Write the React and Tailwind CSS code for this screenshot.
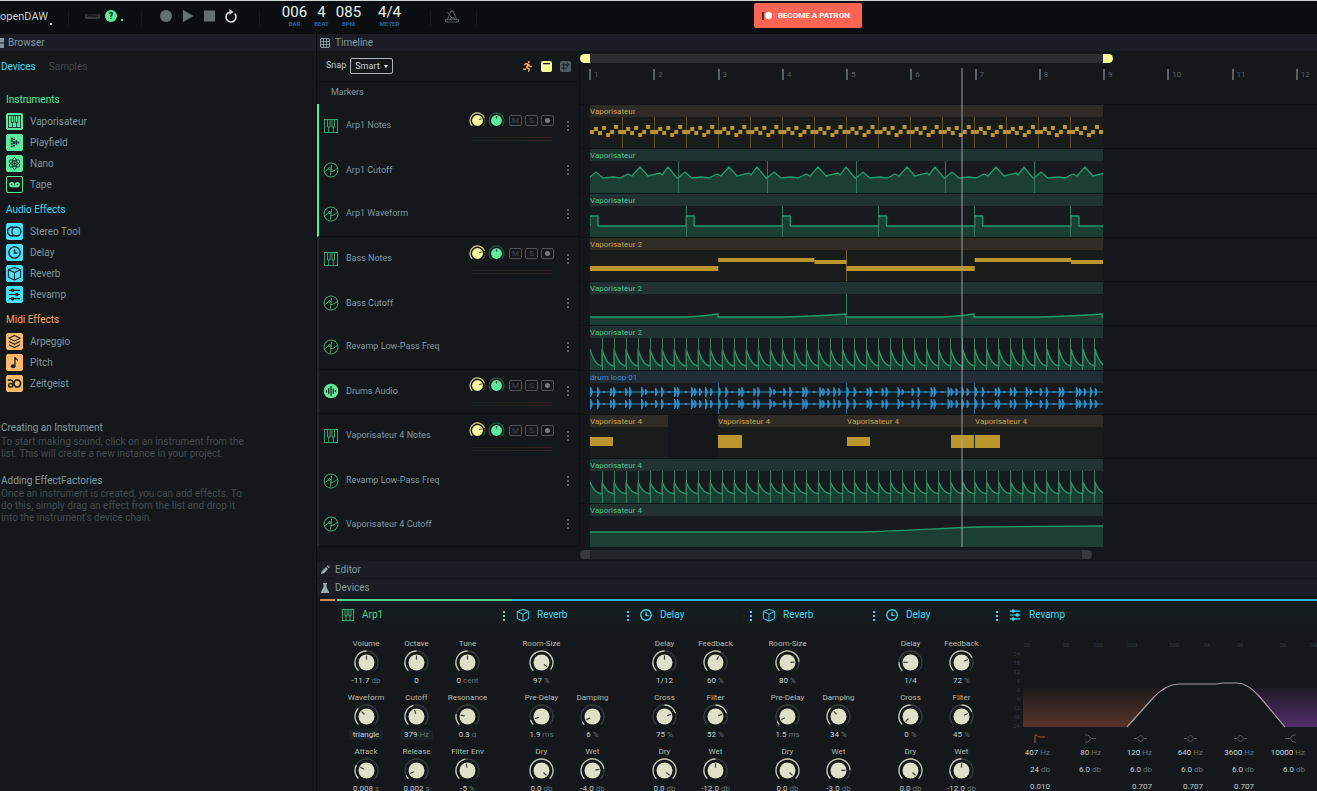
import React, { useState } from "react";
import clsx from "clsx";
import { FaRunning } from "react-icons/fa";

/* ---------- icons ---------- */

const icons = {
  keys: (
    <g fill="none" stroke="currentColor" strokeWidth="0.9">
      <rect x="1.500" y="1.500" width="13" height="13" />
      <path d="M4.500 1.500v7.500h2.500v-7.500M9 1.500v7.500h2.500v-7.500M5.700 9v5.500M10.300 9v5.500" />
    </g>
  ),
  playfield: (
    <g fill="currentColor">
      <path d="M4 3h2v2h-2zM4 5.700h2v2h-2zM4 8.400h2v2h-2zM4 11.100h2v2h-2zM6.600 3.700h2v2h-2zM6.600 6.300h2v3.400h-2zM6.600 10.300h2v2h-2zM9.200 5.700h1.600v4.600h-1.600zM11.400 7h1.600v2h-1.600z" />
    </g>
  ),
  atom: (
    <g fill="none" stroke="currentColor" strokeWidth="0.9">
      <ellipse cx="8" cy="8" rx="2.600" ry="6.200" />
      <ellipse cx="8" cy="8" rx="2.600" ry="6.200" transform="rotate(60 8 8)" />
      <ellipse cx="8" cy="8" rx="2.600" ry="6.200" transform="rotate(120 8 8)" />
      <circle cx="8" cy="8" r="1" fill="currentColor" />
    </g>
  ),
  tape: (
    <g fill="none" stroke="currentColor" strokeWidth="2">
      <circle cx="5" cy="8" r="1.800" />
      <circle cx="11" cy="8" r="1.800" />
      <path d="M5 10h6" />
    </g>
  ),
  stereo: (
    <g fill="none" stroke="currentColor" strokeWidth="1.5">
      <circle cx="10" cy="8" r="4.800" />
      <path d="M7 3.500a4.800 4.800 0 1 0 0 9" />
    </g>
  ),
  clock: (
    <g fill="none" stroke="currentColor" strokeWidth="1.500">
      <circle cx="8" cy="8" r="6" />
      <path d="M8 4.500v4h3" />
    </g>
  ),
  cube: (
    <g fill="none" stroke="currentColor" strokeWidth="1.100" strokeLinejoin="round">
      <path d="M8 1.500l6.500 2.500v8l-6.500 3-6.500-3v-8zM1.500 4l6.500 3 6.500-3M8 7v8" />
    </g>
  ),
  sliders: (
    <g stroke="currentColor" strokeWidth="1.300" fill="currentColor">
      <path d="M2 3.500h12M2 8h12M2 12.500h12" />
      <circle cx="6" cy="3.500" r="1.300" />
      <circle cx="10.500" cy="8" r="1.300" />
      <circle cx="6" cy="12.500" r="1.300" />
    </g>
  ),
  layers: (
    <g fill="none" stroke="currentColor" strokeWidth="1.200" strokeLinejoin="round">
      <path d="M8 1.500l6 3-6 3-6-3zM2 8l6 3 6-3M2 11.500l6 3 6-3" />
    </g>
  ),
  note: (
    <g fill="currentColor">
      <ellipse cx="6.500" cy="12" rx="2.500" ry="2.200" />
      <path d="M7.800 12v-10h1.200c.5 1.800 3.500 1.600 2.500 5-.4-1.500-1.400-1.900-2.300-2v7z" />
    </g>
  ),
  zeitgeist: (
    <g fill="none" stroke="currentColor" strokeWidth="1.700">
      <path d="M1 5c2-1.500 4.500-1 5.500 1.500l1.500 3.500c1.200 2.800 6.500 2.500 6.500-2s-5.300-4.800-6.500-2l-1.500 4c-1 2.500-4.700 2.300-4.700 0s3-2.600 4.200-.8" />
    </g>
  ),
  automation: (
    <g fill="none" stroke="currentColor" strokeWidth="1">
      <circle cx="8" cy="8" r="7" />
      <path d="M2 9.500l4-3M8.500 3l-1 10.500M7.500 9.500c2.500.2 4.500-1 6.500-3" />
      <circle cx="6.500" cy="6.500" r="1" />
    </g>
  ),
  audio: (
    <g>
      <circle cx="8" cy="8" r="7.300" fill="currentColor" />
      <path
        d="M3.500 7v2.500M5.700 5v6M8 3v10M10.300 5.500v5.500M12.500 7v2"
        stroke="#14181a"
        strokeWidth="1.200"
      />
    </g>
  ),
};

const Icon = ({ name, className }) => (
  <svg viewBox="0 0 16 16" className={clsx("shrink-0", className)} aria-hidden="true">
    {icons[name]}
  </svg>
);

const MenuDots = ({ label, className }) => (
  <button aria-label={label} className={clsx("w-2 h-4 shrink-0", className)}>
    <svg viewBox="0 0 8 16" className="w-2 h-4" fill="currentColor">
      <rect x="3" y="3" width="2" height="2" />
      <rect x="3" y="7" width="2" height="2" />
      <rect x="3" y="11" width="2" height="2" />
    </svg>
  </button>
);

/* ---------- knob ---------- */

const polar = (c, r, value) => {
  const a = ((value * 270 - 225) * Math.PI) / 180;
  return [c + r * Math.cos(a), c + r * Math.sin(a)];
};

const arc = (c, r, from, to) => {
  const [x0, y0] = polar(c, r, from);
  const [x1, y1] = polar(c, r, to);
  const large = (to - from) * 270 > 180 ? 1 : 0;
  return `M${x0} ${y0}A${r} ${r} 0 ${large} 1 ${x1} ${y1}`;
};

const Knob = ({ value, anchor = 0, size, color, track, arcColor, label }) => {
  const [v, setV] = useState(value);
  const c = size / 2;
  const r = c - 1;
  const inner = size * 0.32;
  const [px, py] = polar(c, inner - 1, v);
  const [qx, qy] = polar(c, inner * 0.35, v);
  return (
    <span className="relative block shrink-0">
      <svg width={size} height={size} className="block">
        <path d={arc(c, r, 0, 1)} fill="none" stroke={track} strokeWidth="1.3" />
        {v !== anchor && (
          <path
            d={arc(c, r, Math.min(v, anchor), Math.max(v, anchor))}
            fill="none"
            stroke={arcColor}
            strokeWidth="1.3"
          />
        )}
        <circle cx={c} cy={c} r={inner} fill={color} />
        <path d={`M${qx} ${qy}L${px} ${py}`} stroke="#3c403c" strokeWidth="1.2" />
      </svg>
      <input
        type="range"
        min="0"
        max="1"
        step="0.01"
        aria-label={label}
        value={v}
        onChange={(e) => setV(Number(e.target.value))}
        className="absolute inset-0 w-full h-full opacity-0 cursor-pointer"
      />
    </span>
  );
};

/* ---------- header ---------- */

const Divider = () => <div className="w-px h-4 bg-[#14191b]" />;

const Counter = ({ value, unit, className }) => (
  <div className={clsx("flex flex-col items-center", className)}>
    <span className="text-[15px] leading-4 text-[#e8f4f2]">{value}</span>
    <span className="text-[6px] leading-[7px] font-medium text-[#2e72b0]">{unit}</span>
  </div>
);

const Header = () => (
  <header className="h-[33px] shrink-0 flex items-center bg-[#0b0e10]">
    <button className="w-[52px] mb-[2px] flex items-end text-[11px] leading-4 text-[#c3cccb]">
      openDAW<span className="w-[2px] h-[2px] ml-[2px] shrink-0 bg-[#c3cccb]" />
    </button>
    <div className="w-[33px] flex justify-center">
      <Divider />
    </div>
    <span className="w-[15px] h-[5px] mb-[3px] flex items-center justify-center rounded-[1px] bg-[#343a3c] text-[5px] font-bold text-[#0b0e10]">
      MIDI
    </span>
    <button className="ml-[5px] mb-[3px] w-3 h-3 rounded-full bg-[#5eeb9d] text-[9px] leading-3 font-bold text-[#0b0e10]">
      ?
    </button>
    <span className="w-[2px] h-[2px] ml-1 mt-1 bg-[#5eeb9d]" />
    <div className="w-[37px] flex justify-center">
      <Divider />
    </div>
    <div className="flex items-center mb-[3px] text-[#667073]">
      <button aria-label="Record" className="w-[22px]">
        <svg viewBox="0 0 12 12" className="w-3 h-3" fill="currentColor">
          <circle cx="6" cy="6" r="6" />
        </svg>
      </button>
      <button aria-label="Play" className="w-[22px]">
        <svg viewBox="0 0 12 12" className="w-3 h-3" fill="currentColor">
          <path d="M1 0l10.500 6-10.500 6z" />
        </svg>
      </button>
      <button aria-label="Stop" className="w-5">
        <svg viewBox="0 0 12 12" className="w-3 h-3" fill="currentColor">
          <path d="M0 .5h11v11h-11z" />
        </svg>
      </button>
      <button aria-label="Loop" className="w-[14px] text-[#d5dcda]">
        <svg viewBox="0 0 14 14" className="w-[14px] h-[14px]">
          <path
            d="M10.700 4.600a5 5 0 1 1-6.900-.4q1.500-1.200 3.200-1.200"
            fill="none"
            stroke="currentColor"
            strokeWidth="1.700"
          />
          <path d="M5.500 0l4 3-4 3z" fill="currentColor" />
        </svg>
      </button>
    </div>
    <div className="w-[43px] flex justify-center">
      <Divider />
    </div>
    <div className="flex mb-1">
      <Counter value="006" unit="BAR" className="w-[27px]" />
      <Counter value="4" unit="BEAT" className="w-[27px]" />
      <Counter value="085" unit="BPM" className="w-[27px]" />
      <Counter value="4/4" unit="METER" className="w-[55px]" />
    </div>
    <div className="w-[27px] flex justify-center">
      <Divider />
    </div>
    <button aria-label="Metronome" className="mb-[3px] text-[#545d60]">
      <svg viewBox="0 0 16 16" className="w-4 h-4" fill="none" stroke="currentColor">
        <path d="M3.500 11.500l3.500-8.500h2l3.500 8.500M1.500 11.500h13v2.500h-13zM8.500 11l-5-7M6.500 11a2.500 2.500 0 0 1 4.500 0" />
      </svg>
    </button>
    <div className="w-8 flex justify-center">
      <Divider />
    </div>
    <a
      href="#patron"
      className="ml-[262px] w-[108px] h-[25px] mb-1 flex items-center gap-1 pl-2 rounded-[2px] bg-[#ff6552] text-white text-[8px] font-bold whitespace-nowrap"
    >
      <svg viewBox="0 0 12 10" className="w-3 h-[10px]">
        <rect x="0" y="1" width="2" height="8" fill="#4a2b40" />
        <circle cx="6.500" cy="4.500" r="3.500" fill="#fff" />
      </svg>
      BECOME A PATRON
    </a>
  </header>
);

const PanelTitle = ({ icon, children, className }) => (
  <h2
    className={clsx(
      "h-[17px] shrink-0 flex items-center bg-[#1a1e24] text-[10px] leading-4 text-[#8297a2]",
      className
    )}
  >
    {icon}
    {children}
  </h2>
);

/* ---------- browser ---------- */

const deviceGroups = [
  {
    title: "Instruments",
    titleClass: "text-[#5eeb9d]",
    tileClass: "bg-[#5eeb9d] border-[#5eeb9d]",
    items: [
      { name: "Vaporisateur", icon: "keys" },
      { name: "Playfield", icon: "playfield" },
      { name: "Nano", icon: "atom" },
      { name: "Tape", icon: "tape", outlined: true },
    ],
  },
  {
    title: "Audio Effects",
    titleClass: "text-[#3fd8f2]",
    tileClass: "bg-[#47dffa] border-[#47dffa]",
    items: [
      { name: "Stereo Tool", icon: "stereo" },
      { name: "Delay", icon: "clock" },
      { name: "Reverb", icon: "cube" },
      { name: "Revamp", icon: "sliders" },
    ],
  },
  {
    title: "Midi Effects",
    titleClass: "text-[#f9a45c]",
    tileClass: "bg-[#ffb86b] border-[#ffb86b]",
    items: [
      { name: "Arpeggio", icon: "layers" },
      { name: "Pitch", icon: "note" },
      { name: "Zeitgeist", icon: "zeitgeist" },
    ],
  },
];

const Browser = () => {
  const [tab, setTab] = useState("Devices");
  return (
    <aside className="w-[316px] shrink-0 flex flex-col">
      <PanelTitle
        className="gap-1"
        icon={
          <svg viewBox="0 0 4 10" className="w-1 h-[10px]" fill="#8297a2">
            <path d="M0 0h4v4.500h-4zM0 5.500h4v4.500h-4z" />
          </svg>
        }
      >
        Browser
      </PanelTitle>
      <nav className="h-[30px] flex items-center gap-[13px] pl-px text-[10px]">
        {["Devices", "Samples"].map((t) => (
          <button
            key={t}
            onClick={() => setTab(t)}
            className={t === tab ? "text-[#3fd8f2]" : "text-[#3f474b]"}
          >
            {t}
          </button>
        ))}
      </nav>

      <div className="pl-1.5 pt-1">
        {deviceGroups.map((group) => (
          <section key={group.title}>
            <h3 className={clsx("pt-[7px] pb-[3px] text-[10px] leading-4", group.titleClass)}>
              {group.title}
            </h3>
            <ul>
              {group.items.map((item) => (
                <li key={item.name} className="h-[21px] flex items-center gap-[7px]">
                  <span
                    className={clsx(
                      "w-[17px] h-[17px] flex items-center justify-center rounded-[2px] border",
                      item.outlined
                        ? "border-[#5eeb9d] text-[#5eeb9d]"
                        : [group.tileClass, "text-[#14262a]"]
                    )}
                  >
                    <Icon name={item.icon} className="w-[15px] h-[15px]" />
                  </span>
                  <span className="text-[10px] text-[#81939d]">{item.name}</span>
                </li>
              ))}
            </ul>
          </section>
        ))}
      </div>

      <div className="pl-px pr-16 pt-[27px] flex flex-col gap-[14px] text-[10px] leading-3">
        <section>
          <h4 className="text-[#8297a2] leading-[14px]">Creating an Instrument</h4>
          <p className="pt-[1px] text-[#434c50]">
            To start making sound, click on an instrument from the
            <br />
            list. This will create a new instance in your project.
          </p>
        </section>
        <section>
          <h4 className="text-[#8297a2] leading-[14px]">Adding EffectFactories</h4>
          <p className="text-[#434c50]">
            Once an instrument is created, you can add effects. To
            <br />
            do this, simply drag an effect from the list and drop it
            <br />
            into the instrument's device chain.
          </p>
        </section>
      </div>
    </aside>
  );
};

/* ---------- timeline regions ---------- */

const WIDTH = 513;
const BAR = WIDTH / 8;
const BODY = 32;

const times = (n, fn) => Array.from({ length: n }, (_, i) => fn(i));

const Lines = ({ step, color, from = 1 }) => (
  <g stroke={color}>
    {times(Math.ceil(WIDTH / step) - from, (i) => {
      const x = Math.floor((i + from) * step) + 0.5;
      return <path key={i} d={`M${x} 0V${BODY}`} />;
    })}
  </g>
);

const Curve = ({ d }) => (
  <g>
    <path d={`${d}V${BODY}H0Z`} fill="#1b3f33" />
    <path d={d} fill="none" stroke="#229a6b" strokeWidth="1.3" />
  </g>
);

const ArpNotes = () => {
  const ys = [15, 12, 16, 11, 18, 15, 10, 15];
  return (
    <g>
      <Lines step={BAR / 2} color="#5d5333" />
      <g fill="#bb962d">
        {times(128, (i) => (
          <rect key={i} x={(i * BAR) / 16} y={ys[i % 8] - 2} width="4" height="4" />
        ))}
      </g>
    </g>
  );
};

const ArpCutoff = () => {
  const shape = [
    [0, 17], [7, 11], [14, 17], [24, 16], [31, 17], [39, 13], [43, 15],
    [51, 6], [59, 15], [71, 12], [73, 14], [79, 6], [88, 17],
  ];
  const pts = times(6, (k) => shape.map(([x, y]) => `${x - 1 + k * 89} ${y}`)).flat();
  return (
    <g>
      <Curve d={`M${pts.join("L")}`} />
      <Lines step={88.8} color="#2f7a5c" />
    </g>
  );
};

const ArpWaveform = () => {
  const step = BAR * 1.5;
  const d = times(6, (k) => `V10H${k * step + 8}V20H${Math.min((k + 1) * step, WIDTH)}`).join("");
  return (
    <g>
      <Curve d={`M0 20${d}`} />
      <Lines step={step} color="#2f7a5c" />
    </g>
  );
};

const BassNotes = () => (
  <g fill="#bb962d">
    <path d={`M${BAR * 4} 0V${BODY}`} stroke="#6d6137" />
    {[0, BAR * 4].map((x) => (
      <g key={x}>
        <rect x={x} y="16" width={BAR * 2} height="5" />
        <rect x={x + BAR * 2} y="8" width={BAR * 1.5} height="4" />
        <rect x={x + BAR * 3.5} y="10" width={BAR * 0.5} height="4" />
      </g>
    ))}
  </g>
);

const BassCutoff = () => {
  const loop = (x) =>
    `${x} 23H${x + 96}Q${x + 114} 22 ${x + 128} 20V23H${x + 192}Q${x + 230} 22 ${x + 256} 20V23`;
  return (
    <g>
      <Curve d={`M${loop(0)}L${loop(256)}H${WIDTH}`} />
      <Lines step={BAR * 4} color="#2f7a5c" />
    </g>
  );
};

const Decay = ({ low }) => {
  const step = (BAR * 3) / 16;
  const d = times(43, (i) => {
    const x = i * step;
    return `L${x} 11Q${x + step * 0.35} ${low - 1} ${x + step} ${low}`;
  }).join("");
  return (
    <g>
      <Curve d={`M0 11${d}`} />
      <Lines step={step} color="#36805f" />
    </g>
  );
};

const DrumLoop = () => {
  // [offset, amplitude] of every hit in one two-bar loop
  const hits = [
    [1, 5], [8, 5], [14, 1], [21, 4], [24, 5], [30, 1], [36, 4], [40, 5], [52, 5], [56, 3],
    [62, 1], [66, 4], [72, 5], [79, 1], [85, 5], [88, 5], [96, 1], [102, 5], [105, 4], [110, 4],
    [116, 5], [121, 4],
  ];
  return (
    <g>
      <Lines step={BAR * 2} color="#2c6d97" />
      <g fill="#2b8cc6">
        {[9, 21].map((cy) => (
          <g key={cy}>
            <rect x="0" y={cy - 0.5} width={WIDTH} height="1" />
            {times(4, (k) =>
              hits.map(([x, a]) => (
                <path
                  key={`${k}-${x}`}
                  d={`M${k * BAR * 2 + x - 1} ${cy - a}h1l1 ${a * 0.4}l1 ${a * 0.6}l-1 ${a * 0.6}l-1 ${a * 0.4}h-1z`}
                />
              ))
            )}
          </g>
        ))}
      </g>
    </g>
  );
};

const RiseCutoff = () => <Curve d="M0 16H270C320 15 350 12 390 11L513 10" />;

const Block = ({ blocks }) => (
  <g fill="#bb962d">
    {blocks.map(([x, y, w, h]) => (
      <rect key={x} x={x} y={y} width={w} height={h} />
    ))}
  </g>
);

const regionTones = {
  note: { head: "bg-[#2f2c27] text-[#c4a24a]", body: "bg-[#1a1c1b]" },
  value: { head: "bg-[#203330] text-[#4cc08e]", body: "bg-[#171b1d]" },
  audio: { head: "bg-[#202c36] text-[#3f8dcc]", body: "bg-[#161a1d]" },
};

const Region = ({ name, tone, className, children }) => (
  <div className={clsx("flex flex-col shrink-0", className)}>
    <div className={clsx("h-3 text-[8px] leading-[13px] truncate", regionTones[tone].head)}>
      {name}
    </div>
    <svg className={clsx("block w-full flex-1 min-h-0", regionTones[tone].body)}>{children}</svg>
  </div>
);

const full = (name, tone, art) => (
  <Region name={name} tone={tone} className="w-[513px]">
    {art}
  </Region>
);

const tracks = [
  { name: "Arp1 Notes", icon: "keys", mixer: true, active: true, lane: full("Vaporisateur", "note", <ArpNotes />) },
  { name: "Arp1 Cutoff", icon: "automation", active: true, lane: full("Vaporisateur", "value", <ArpCutoff />) },
  { name: "Arp1 Waveform", icon: "automation", active: true, last: true, lane: full("Vaporisateur", "value", <ArpWaveform />) },
  { name: "Bass Notes", icon: "keys", mixer: true, lane: full("Vaporisateur 2", "note", <BassNotes />) },
  { name: "Bass Cutoff", icon: "automation", lane: full("Vaporisateur 2", "value", <BassCutoff />) },
  { name: "Revamp Low-Pass Freq", icon: "automation", last: true, lane: full("Vaporisateur 2", "value", <Decay low={28} />) },
  { name: "Drums Audio", icon: "audio", mixer: true, last: true, lane: full("drum loop 01", "audio", <DrumLoop />) },
  {
    name: "Vaporisateur 4 Notes",
    icon: "keys",
    mixer: true,
    lane: (
      <>
        <Region name="Vaporisateur 4" tone="note" className="w-[78px] mr-[50px]">
          <Block blocks={[[0, 10, 23, 9]]} />
        </Region>
        <Region name="Vaporisateur 4" tone="note" className="w-[129px]">
          <Block blocks={[[0, 8, 24, 13]]} />
        </Region>
        <Region name="Vaporisateur 4" tone="note" className="w-32">
          <Block blocks={[[0, 10, 23, 9], [104, 8, 23, 13]]} />
        </Region>
        <Region name="Vaporisateur 4" tone="note" className="w-32">
          <Block blocks={[[0, 8, 25, 13]]} />
        </Region>
      </>
    ),
  },
  { name: "Revamp Low-Pass Freq", icon: "automation", lane: full("Vaporisateur 4", "value", <Decay low={23} />) },
  { name: "Vaporisateur 4 Cutoff", icon: "automation", last: true, lane: full("Vaporisateur 4", "value", <RiseCutoff />) },
];

const TrackMixer = ({ name }) => (
  <div className="w-[86px] flex flex-col gap-2">
    <div className="flex items-center">
      <Knob value={0.75} size={17} color="#fbfaa0" track="#3a3b2c" arcColor="#c9c886" label={`${name} volume`} />
      <span className="w-[2px]" />
      <Knob value={0.5} anchor={0.5} size={17} color="#5eeb9d" track="#22503a" arcColor="#5eeb9d" label={`${name} panning`} />
      <div className="flex gap-[3px] pl-1">
        {["M", "S"].map((t) => (
          <button
            key={t}
            className="w-[13px] h-[11px] rounded-[2px] border border-[#4c5257] text-[8px] leading-[9px] text-[#42484d]"
          >
            {t}
          </button>
        ))}
        <button
          aria-label="Arm"
          className="w-[13px] h-[11px] flex items-center justify-center rounded-[2px] border border-[#4c5257]"
        >
          <span className="w-[5px] h-[5px] rounded-full bg-[#757b81]" />
        </button>
      </div>
    </div>
    <div className="ml-[3px] w-20 flex flex-col gap-[2px]">
      <div className="h-px bg-linear-to-r from-[#17281f] via-[#26261c] to-[#3a2022]" />
      <div className="h-px bg-linear-to-r from-[#17281f] via-[#26261c] to-[#3a2022]" />
    </div>
  </div>
);

const Track = ({ track }) => (
  <div className="flex min-h-0">
    <div
      className={clsx(
        "w-[263px] shrink-0 flex items-center border-l-2 pr-[7px] border-r border-r-[#0f1214]",
        track.active ? "border-l-[#5eeb9d]" : "border-l-[#23282d]",
        track.last && "border-b border-b-[#0e1113]"
      )}
    >
      <Icon
        name={track.icon}
        className={clsx("w-4 h-4 ml-1 mr-[7px]", track.icon === "audio" ? "text-[#5eeb9d]" : "text-[#43ad78]")}
      />
      <span className="flex-1 text-[9px] text-[#8297a2] whitespace-nowrap">{track.name}</span>
      {track.mixer && <TrackMixer name={track.name} />}
      <MenuDots label="Track menu" className="ml-[9px] text-[#596267]" />
    </div>
    <div className="flex-1 min-w-0 flex pl-[10px] overflow-hidden border-t border-[#101315]">
      {track.lane}
    </div>
  </div>
);

const Timeline = () => (
  <section className="relative shrink-0 flex flex-col">
    <PanelTitle
      className="pl-[3px] gap-[5px]"
      icon={
        <svg viewBox="0 0 10 10" className="w-[10px] h-[10px]" fill="none" stroke="#8297a2">
          <rect x=".5" y=".5" width="9" height="9" rx="1.500" />
          <path d="M1 3.500h8M1 6.500h8M3.500 1v8M6.500 1v8" />
        </svg>
      }
    >
      Timeline
    </PanelTitle>
    <div className="flex">
      <div className="w-[263px] shrink-0 border-r border-[#0f1214]">
        <div className="h-[30px] flex items-center pl-[9px] pr-2 text-[9px]">
          <label htmlFor="snap" className="mr-1 text-[#bfc9cb]">
            Snap
          </label>
          <div className="relative">
            <select
              id="snap"
              defaultValue="Smart"
              className="w-[43px] h-4 pl-1 appearance-none rounded-[2px] border border-[#aeb7b9] bg-[#14181a] text-[9px] leading-3 text-[#c9d2d3]"
            >
              <option>Smart</option>
              <option>Bar</option>
            </select>
            <svg viewBox="0 0 4 3" className="absolute right-[5px] top-[7px] w-1 h-[3px]" fill="#e4ecec">
              <path d="M0 0h4l-2 3z" />
            </svg>
          </div>
          <div className="ml-auto flex items-center gap-2">
            <button aria-label="Follow cursor" className="text-[#f3a866]">
              <FaRunning size={11} />
            </button>
            <button aria-label="Loop area">
              <svg viewBox="0 0 11 11" className="w-[11px] h-[11px]">
                <rect width="11" height="11" rx="2" fill="#fbfaa0" />
                <rect x="2" y="2" width="7" height="1.300" fill="#14181a" />
              </svg>
            </button>
            <button aria-label="Clip grid">
              <svg viewBox="0 0 11 11" className="w-[11px] h-[11px]">
                <rect width="11" height="11" rx="2" fill="#525c64" />
                <path d="M1.500 3.800h8M1.500 7.200h5M3.800 1.500v8M7.200 1.500v5" stroke="#1d2327" />
              </svg>
            </button>
          </div>
        </div>
        <div className="h-[23px] flex items-center pl-[14px] border-t border-[#111416] text-[9px] text-[#8297a2]">
          Markers
        </div>
      </div>
      <div className="flex-1 min-w-0 overflow-hidden pt-[3px]">
        <div className="flex w-[533px] h-[9px]">
          <div className="w-[10px] rounded-l-full bg-[#fbfaa0]" />
          <div className="flex-1 bg-[#2c2f32]" />
          <div className="w-[10px] rounded-r-full bg-[#fbfaa0]" />
        </div>
        <div className="ml-[9px] mt-[6px] w-[771px] grid grid-cols-12">
          {times(12, (i) => (
            <div
              key={i}
              className="h-[11px] pl-[3px] border-l-2 border-[#566266] text-[8px] leading-[11px] text-[#566165]"
            >
              {i + 1}
            </div>
          ))}
        </div>
      </div>
    </div>

    <div className="h-[443px] grid grid-rows-10">
      {tracks.map((track, i) => (
        <Track key={i} track={track} />
      ))}
    </div>

    <div className="h-[14px] pl-[263px] flex items-center">
      <div className="w-[512px] h-[9px] flex justify-between rounded-full bg-[#222528]">
        <span className="w-[10px] rounded-l-full bg-[#383b3d]" />
        <span className="w-[10px] rounded-r-full bg-[#383b3d]" />
      </div>
    </div>

    {/* playhead */}
    <div className="absolute left-[644px] top-[34px] bottom-[14px] w-[2px] bg-[#a3abad]/45" />
  </section>
);

/* ---------- devices ---------- */

const chain = [
  {
    name: "Arp1",
    icon: "keys",
    tone: "text-[#4fd08c] border-[#4fd08c]",
    wide: true,
    knobs: [
      ["Volume", "-11.7", "db", 0.5],
      ["Octave", "0", "", 0.5],
      ["Tune", "0", "cent", 0.5],
      ["Waveform", "triangle", "", 0.33, 0, true],
      ["Cutoff", "379", "Hz", 0.44, 0, true],
      ["Resonance", "0.3", "q", 0.21],
      ["Attack", "0.008", "s", 0.27],
      ["Release", "0.002", "s", 0.07],
      ["Filter Env", "-5", "%", 0.46],
    ],
  },
  {
    name: "Reverb",
    icon: "cube",
    knobs: [
      ["Room-Size", "97", "%", 0.97],
      null,
      ["Pre-Delay", "1.9", "ms", 0.1],
      ["Damping", "6", "%", 0.06],
      ["Dry", "0.0", "db", 1],
      ["Wet", "-4.0", "db", 0.8],
    ],
  },
  {
    name: "Delay",
    icon: "clock",
    knobs: [
      ["Delay", "1/12", "", 0.5],
      ["Feedback", "60", "%", 0.6],
      ["Cross", "75", "%", 0.77, 0.5],
      ["Filter", "52", "%", 0.77, 0.5],
      ["Dry", "0.0", "db", 1],
      ["Wet", "-12.0", "db", 0.5],
    ],
  },
  {
    name: "Reverb",
    icon: "cube",
    knobs: [
      ["Room-Size", "80", "%", 0.82],
      null,
      ["Pre-Delay", "1.5", "ms", 0.07],
      ["Damping", "34", "%", 0.34],
      ["Dry", "0.0", "db", 1],
      ["Wet", "-3.0", "db", 0.83],
    ],
  },
  {
    name: "Delay",
    icon: "clock",
    knobs: [
      ["Delay", "1/4", "", 0.17],
      ["Feedback", "72", "%", 0.74],
      ["Cross", "0", "%", 0, 0.5],
      ["Filter", "45", "%", 0.74, 0.5],
      ["Dry", "0.0", "db", 1],
      ["Wet", "-12.0", "db", 0.5],
    ],
  },
];

const Value = ({ value, unit, boxed }) => (
  <span
    className={clsx(
      "h-[11px] px-1 text-[8px] leading-[11px] whitespace-pre text-[#c3ced8]",
      boxed && "rounded-[2px] bg-[#1a2228]"
    )}
  >
    {value}
    {unit && <span className="text-[#66747c]"> {unit}</span>}
  </span>
);

const KnobCell = ({ knob }) => {
  const [name, value, unit, position, anchor, boxed] = knob;
  return (
    <div className="h-[54px] flex flex-col items-center">
      <span className="h-[13px] text-[8px] leading-[13px] text-[#b7b9ab] whitespace-nowrap">
        {name}
      </span>
      <Knob
        value={position}
        anchor={anchor}
        size={25}
        color="#dfe0ca"
        track="#3b3e3e"
        arcColor="#c3c4b1"
        label={name}
      />
      <Value value={value} unit={unit} boxed={boxed} />
    </div>
  );
};

const DeviceTitle = ({ name, icon, menu = true }) => (
  <div className="h-[35px] pt-[7px] flex items-start text-[10px] leading-[14px]">
    <Icon name={icon} className="w-[14px] h-[14px]" />
    <h3 className="pl-[7px] flex-1">{name}</h3>
    {menu && <MenuDots label="Device menu" className="mr-[3px]" />}
  </div>
);

const Device = ({ device }) => (
  <article
    className={clsx(
      "shrink-0 pl-1 border-t-2 bg-linear-to-b from-[#141d20] to-[#14181a] to-[40px]",
      device.tone || "text-[#3fd8f2] border-[#2fb9cd]",
      device.wide ? "w-[175px] pr-px" : "w-[123px]"
    )}
  >
    <DeviceTitle name={device.name} icon={device.icon} />
    <div
      className={clsx(
        "grid pt-px",
        device.wide ? "grid-cols-[50px_51px_51px]" : "grid-cols-[51px_51px]"
      )}
    >
      {device.knobs.map((knob, i) => (knob ? <KnobCell key={i} knob={knob} /> : <span key={i} />))}
    </div>
  </article>
);

const bell = "M0 7.500h3l3.500-3.500 3.500 3.500-3.500 3.500-3.500-3.500M10 7.500h3";

const bands = [
  { hz: "407", db: "24", q: "0.010", path: "M1 12v-5c0-4 1-4 2-2.500s2 1.500 8 1.500" },
  { hz: "80", db: "6.0", path: "M1 4h3l3 3.500h5M1 11h3l3-3.500" },
  { hz: "120", db: "6.0", q: "0.707", path: bell },
  { hz: "640", db: "6.0", q: "0.707", path: bell },
  { hz: "3600", db: "6.0", q: "0.707", path: bell },
  { hz: "10000", db: "6.0", path: "M12 4h-3l-3 3.500h-5M12 11h-3l-3-3.500" },
];

const freqMarks = [
  [4, "20"], [43, "50"], [75, "100"], [109, "200"], [151, "500"],
  [184, "1k"], [217, "2k"], [260, "5k"], [291, "10k"],
];
const dbMarks = [24, 18, 12, 6, 0, -6, -12, -18, -24];

const Spectrum = () => (
  <div className="pl-[7px]">
    <svg className="block w-full h-[91px] overflow-visible" fontSize="6" fill="#343b40">
      <defs>
        <linearGradient id="low" x1="0" y1="0" x2="0" y2="1">
          <stop offset="0" stopColor="#6b3a30" stopOpacity="0.1" />
          <stop offset="1" stopColor="#6b3a30" stopOpacity="0.8" />
        </linearGradient>
        <linearGradient id="high" x1="0" y1="0" x2="0" y2="1">
          <stop offset="0" stopColor="#55306f" stopOpacity="0.15" />
          <stop offset="1" stopColor="#55306f" stopOpacity="0.95" />
        </linearGradient>
      </defs>
      {freqMarks.map(([x, t]) => (
        <text key={t} x={x + 12} y="11" textAnchor="middle">
          {t}
        </text>
      ))}
      {dbMarks.map((t, i) => (
        <text key={t} x="9" y={20 + i * 9} textAnchor="end">
          {t}
        </text>
      ))}
      <path d="M12 52h146q-9 2-18 11l-24 28h-104z" fill="url(#low)" />
      <path d="M238 52h104v39h-68l-26-30q-5-6-10-9z" fill="url(#high)" />
      <path
        d="M116 91L142 62Q154 49 167 48H205L212 47H226Q236 47 248 60L274 91"
        fill="none"
        stroke="#a79aa3"
        strokeWidth="1.2"
      />
    </svg>
  </div>
);

const Revamp = () => (
  <article className="flex-1 min-w-0 overflow-hidden border-t-2 border-[#2fb9cd] bg-linear-to-b from-[#141d20] to-[#14181a] to-[40px] text-[#3fd8f2]">
    <div className="pl-1">
      <DeviceTitle name="Revamp" icon="sliders" menu={false} />
    </div>
    <Spectrum />
    <div className="flex pl-[11px] pt-1">
      {bands.map((band, i) => (
        <button
          key={band.hz}
          aria-label={`Band ${band.hz} Hz`}
          className={clsx("w-[50px] shrink-0 flex justify-center", i === 0 ? "text-[#c4563a]" : "text-[#525b5f]")}
        >
          <svg viewBox="0 0 13 14" className="w-[13px] h-[14px]" fill="none" stroke="currentColor">
            <path d={band.path} />
          </svg>
        </button>
      ))}
    </div>
    <div className="flex pt-[2px]">
      {bands.map((band) => (
        <div key={band.hz} className="w-[51px] shrink-0 flex flex-col items-end gap-[6px] pr-px">
          <Value value={band.hz} unit="Hz" />
          <Value value={band.db} unit="db" />
          {band.q && <Value value={band.q} />}
        </div>
      ))}
    </div>
  </article>
);

const DevicePanel = () => (
  <section className="flex-1 min-h-0 pt-[3px] pl-[3px] flex overflow-hidden">
    <div className="w-[15px] mr-[2px] shrink-0 border-t-2 border-[#c98a52]" />
    {chain.map((device, i) => (
      <Device key={i} device={device} />
    ))}
    <Revamp />
  </section>
);

const App = () => {
  return (
    <div className="h-screen flex flex-col overflow-hidden bg-[#14181a] font-['Roboto',sans-serif]">
      <div className="h-px shrink-0 bg-[#cfd8d6]" />
      <Header />
      <main className="flex-1 min-h-0 flex">
        <Browser />
        <div className="w-px shrink-0 bg-[#0d1012]" />
        <div className="flex-1 min-w-0 flex flex-col">
          <Timeline />
          <PanelTitle
            className="pl-[3px] gap-[5px]"
            icon={
              <svg viewBox="0 0 10 10" className="w-[10px] h-[10px]" fill="#9aaab3">
                <path d="M1 9l.500-2.500 4.500-4.500 2 2-4.500 4.500zM6.800 1.200l1-1 2 2-1 1z" />
              </svg>
            }
          >
            Editor
          </PanelTitle>
          <PanelTitle
            className="pl-[3px] gap-[5px] mt-px"
            icon={
              <svg viewBox="0 0 10 10" className="w-[10px] h-[10px]" fill="#9aaab3">
                <path d="M3 0h4v1h-.5v3l2.500 5v1h-8v-1l2.500-5v-3h-.5z" />
              </svg>
            }
          >
            Devices
          </PanelTitle>
          <DevicePanel />
        </div>
      </main>
    </div>
  );
};

export default App;
